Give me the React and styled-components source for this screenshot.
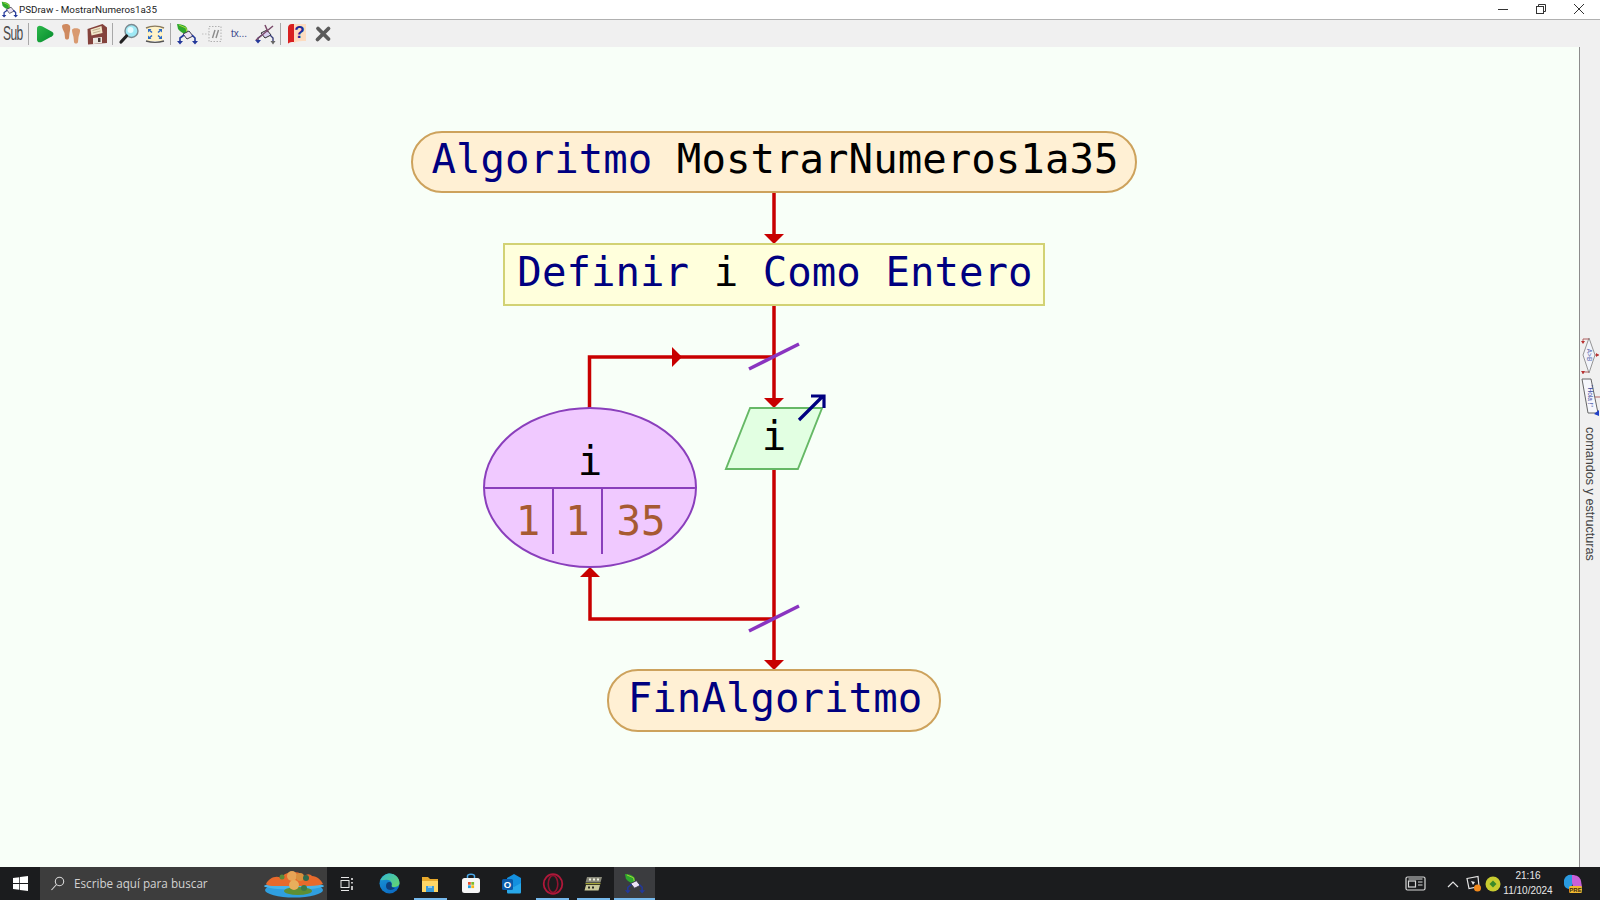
import React from "react";
import styled, { createGlobalStyle } from "styled-components";

const GlobalStyle = createGlobalStyle`
  html, body { margin: 0; padding: 0; height: 100%; overflow: hidden; }
  body { font-family: "Open Sans", "Liberation Sans", sans-serif; }
`;

const Page = styled.div`
  width: 1600px;
  height: 900px;
  display: flex;
  flex-direction: column;
  background: #f0f0f0;
`;

/* window title */
const TitleBar = styled.div`
  height: 19px;
  flex: none;
  display: flex;
  align-items: center;
  padding-left: 1px;
  background: #fff;
  border-bottom: 1px solid #b0b0b0;
`;

const TitleText = styled.span`
  margin-left: 1px;
  font-family: "Roboto", sans-serif;
  font-size: 9.8px;
  color: #222;
  white-space: nowrap;
`;

const WindowButtons = styled.div`
  margin-left: auto;
  display: flex;
  align-items: flex-start;
  align-self: flex-start;
  padding-right: 2px;
`;

const WindowButton = styled.div`
  width: 38px;
  height: 17px;
  display: flex;
  align-items: center;
  justify-content: center;
`;

/* toolbar */
const Toolbar = styled.div`
  height: 27px;
  flex: none;
  display: flex;
  align-items: center;
  background: #f0f0f0;
`;

const SubCell = styled.div`
  width: 26px;
  flex: none;
  padding-left: 3px;
  box-sizing: border-box;
  overflow: hidden;
`;

const SubLabel = styled.span`
  display: inline-block;
  font-family: "Liberation Sans", sans-serif;
  font-size: 20px;
  letter-spacing: -1px;
  color: #4a4a4a;
  transform: scaleX(0.6);
  transform-origin: left center;
`;

const Divider = styled.div`
  width: 1px;
  height: 22px;
  background: #a8a8a8;
  margin: 0 3px 0 2px;
`;

const ToolButton = styled.div`
  width: 26px;
  height: 26px;
  flex: none;
  display: flex;
  align-items: center;
  justify-content: center;
`;

const TxLabel = styled.span`
  font-family: "Liberation Sans", sans-serif;
  font-size: 10px;
  color: #3c4a8c;
`;

/* main area */
const Main = styled.div`
  flex: 1;
  min-height: 0;
  display: flex;
`;

const Canvas = styled.div`
  position: relative;
  flex: 1;
  background: #f8fff8;
`;

const SidePanel = styled.div`
  width: 20px;
  flex: none;
  display: flex;
  flex-direction: column;
  align-items: center;
  gap: 3px;
  padding-top: 291px;
  border-left: 1px solid #8c8c8c;
  background: #f0f0f0;
`;

const SideLabel = styled.span`
  writing-mode: vertical-rl;
  margin-top: 8px;
  font-family: "Liberation Sans", sans-serif;
  font-size: 12.6px;
  color: #444;
  white-space: nowrap;
`;

const WireLayer = styled.svg`
  position: absolute;
  inset: 0;
  width: 100%;
  height: 100%;
  pointer-events: none;
  z-index: ${(p) => p.$z || 0};
`;

const Node = styled.div`
  position: absolute;
  left: ${(p) => p.$x}px;
  top: ${(p) => p.$y}px;
  width: ${(p) => p.$w}px;
  height: ${(p) => p.$h}px;
  box-sizing: border-box;
  display: flex;
  align-items: center;
  justify-content: center;
  padding-left: 2px;
  padding-bottom: ${(p) => p.$pb ?? 6}px;
  font-family: "DejaVu Sans Mono", monospace;
  font-size: 40.7px;
  letter-spacing: 0.04px;
  line-height: 1;
  color: #000;
  white-space: pre;
`;

const Pill = styled(Node)`
  background: #fff0d4;
  border: 2px solid #cda25c;
  border-radius: 31px;
`;

const Process = styled(Node)`
  background: #ffffdc;
  border: 2px solid #d2d274;
`;

const Output = styled(Node)`
  padding-left: 0;

  &::before {
    content: "";
    position: absolute;
    inset: 0 12px;
    background: #e2ffe2;
    border: 2px solid #66b866;
    transform: skewX(-21.6deg);
  }
`;

const OutputText = styled.span`
  position: relative;
`;

const Keyword = styled.span`
  color: #000080;
`;

const ForEllipse = styled.div`
  position: absolute;
  left: ${(p) => p.$x}px;
  top: ${(p) => p.$y}px;
  width: 214px;
  height: 161px;
  box-sizing: border-box;
  overflow: hidden;
  display: flex;
  flex-direction: column;
  background: #f0c9ff;
  border: 2px solid #8a3fbc;
  border-radius: 50%;
  font-family: "DejaVu Sans Mono", monospace;
  font-size: 40.7px;
  line-height: 1;
`;

const ForVariable = styled.div`
  height: 80px;
  flex: none;
  box-sizing: border-box;
  display: flex;
  align-items: flex-end;
  justify-content: center;
  padding-bottom: 5px;
  border-bottom: 2px solid #8a3fbc;
  color: #000;
`;

const ForValues = styled.div`
  display: flex;
  height: 65px;
  padding-left: 19px;
`;

const ForCell = styled.div`
  width: ${(p) => p.$w}px;
  flex: none;
  box-sizing: border-box;
  display: flex;
  align-items: center;
  justify-content: center;
  color: #a65a32;
  border-right: ${(p) => (p.$last ? "none" : "2px solid #8a3fbc")};
`;

/* taskbar */
const Taskbar = styled.div`
  height: 33px;
  flex: none;
  display: flex;
  align-items: stretch;
  background: #1b1c1e;
`;

const StartButton = styled.div`
  width: 40px;
  flex: none;
  display: flex;
  align-items: center;
  justify-content: center;
`;

const SearchBox = styled.div`
  width: 287px;
  flex: none;
  box-sizing: border-box;
  display: flex;
  align-items: center;
  padding-left: 10px;
  background: #3d3d3d;
`;

const SearchText = styled.span`
  margin-left: 9px;
  padding-bottom: 2px;
  font-size: 11.7px;
  color: #d2d2d2;
  white-space: nowrap;
`;

const SearchArt = styled.div`
  margin-left: auto;
  margin-right: 2px;
  display: flex;
`;

const TaskButton = styled.div`
  position: relative;
  width: ${(p) => p.$w || 40.8}px;
  margin-right: ${(p) => p.$gap || 0}px;
  flex: none;
  display: flex;
  align-items: center;
  justify-content: center;
  background: ${(p) => (p.$active ? "#3b3c3f" : "transparent")};

  &::after {
    content: "";
    display: ${(p) => (p.$open ? "block" : "none")};
    position: absolute;
    bottom: 0;
    left: ${(p) => (p.$active ? 0 : 4)}px;
    right: ${(p) => (p.$active ? 0 : 4)}px;
    height: 2px;
    background: #76b9ed;
  }
`;

const Tray = styled.div`
  margin-left: auto;
  display: flex;
  align-items: center;
  padding-right: 12px;
`;

const TrayItem = styled.div`
  width: ${(p) => p.$w}px;
  margin-right: ${(p) => p.$gap || 0}px;
  flex: none;
  display: flex;
  align-items: center;
  justify-content: center;
`;

const Clock = styled.div`
  width: 50px;
  margin-right: 5px;
  padding-bottom: 2px;
  flex: none;
  display: flex;
  flex-direction: column;
  align-items: center;
  font-family: "Liberation Sans", sans-serif;
  font-size: 10px;
  line-height: 15px;
  color: #e8e8e8;
`;

const RED = "#c80000";
const PURPLE = "#8a35c0";
const OFFSET = 47; // the canvas starts below the title and tool bars

const y = (v) => v - OFFSET;

const Wires = () => (
  <WireLayer>
    <g fill="none" stroke={RED} strokeWidth="3.5">
      <path d={`M774 ${y(193)}V${y(236)}`} />
      <path d={`M774 ${y(306)}V${y(400)}`} />
      <path d={`M589.5 ${y(408)}V${y(357)}H774`} />
      <path d={`M774 ${y(469)}V${y(661)}`} />
      <path d={`M774 ${y(619)}H590V${y(575)}`} />
    </g>
    <g fill={RED}>
      <polygon points={`764,${y(234)} 784,${y(234)} 774,${y(244)}`} />
      <polygon points={`764,${y(398)} 784,${y(398)} 774,${y(408)}`} />
      <polygon points={`764,${y(660)} 784,${y(660)} 774,${y(670)}`} />
      <polygon points={`580,${y(577)} 600,${y(577)} 590,${y(567)}`} />
      <polygon points={`672,${y(347)} 672,${y(367)} 682,${y(357)}`} />
    </g>
    <g stroke={PURPLE} strokeWidth="3.5">
      <line x1="749" y1={y(369)} x2="799" y2={y(344)} />
      <line x1="749" y1={y(631)} x2="799" y2={y(606)} />
    </g>
  </WireLayer>
);

const OutputArrow = () => (
  <WireLayer $z={2}>
    <path
      d={`M799 ${y(420)}L823 ${y(396)}M811 ${y(396)}H824V${y(408)}`}
      fill="none"
      stroke="#000080"
      strokeWidth="3.2"
    />
  </WireLayer>
);

/* toolbar drawings */
const FlowIcon = ({ size = 22 }) => (
  <svg width={size} height={size} viewBox="0 0 22 22">
    <path d="M1 1c4 0 8 1 10 4l1 6c-4 0-8-2-10-5z" fill="#2da82d" />
    <path d="M3 2l7 3 1 5" fill="none" stroke="#a8d838" strokeWidth="1" />
    <path d="M7 11l6-3 4 5-6 3z" fill="#ece2f4" stroke="#3a3a4a" strokeWidth="1" />
    <path d="M8 12l-4 3v4M16 12l3 3v4" fill="none" stroke="#23389a" strokeWidth="1.600" />
    <path d="M1 18h6l-3 3.500zM16 18h6l-3 3.500z" fill="#23389a" />
  </svg>
);

const PlayIcon = () => (
  <svg width="20" height="20" viewBox="0 0 20 20">
    <defs>
      <linearGradient id="play" x1="0" y1="0" x2="1" y2="1">
        <stop offset="0" stopColor="#2cb84a" />
        <stop offset="1" stopColor="#048a2c" />
      </linearGradient>
    </defs>
    <path d="M2 4.500c0-2.800 2.500-3.500 5-2.300l10 5.500c2 1.200 2 3.400 0 4.600l-10 5.500c-2.500 1.200-5 .5-5-2.300z" fill="url(#play)" />
  </svg>
);

const FeetIcon = () => (
  <svg width="20" height="22" viewBox="0 0 20 22">
    <path d="M1 3c0-2.500 7-3 8 0 .5 2 0 5-.5 7l-.5 5c-.5 2-3.500 2-4 0l-.5-5C2.500 8 1 5 1 3z" fill="#cf8a60" />
    <path d="M11 7c0-2.500 7.500-2.500 8 0 .3 2-1 5-1.500 7l-.5 5c-.5 2-3.500 2-4 0l-.5-5c-.5-2-1.500-5-1.500-7z" fill="#d99a70" />
  </svg>
);

const FloppyIcon = () => (
  <svg width="22" height="22" viewBox="0 0 22 22">
    <path d="M1.500 6l15-5 4.500 3.500V20l-19 1.500z" fill="#84423c" />
    <path d="M4.500 6.500l11-3.500 1 7-11 2.500z" fill="#f2e6c8" />
    <path d="M6.500 7.500l7.500-2M7 10l7.500-2" stroke="#b9a987" strokeWidth=".9" />
    <path d="M7 15l9-1v6l-9 1z" fill="#ece8e0" />
    <path d="M12 15h2.500v4H12z" fill="#4a3a38" />
  </svg>
);

const SearchIcon = () => (
  <svg width="22" height="22" viewBox="0 0 22 22">
    <circle cx="13.500" cy="8" r="6.500" fill="#9fe9f5" stroke="#7b8a90" strokeWidth="1.400" />
    <circle cx="12.500" cy="7" r="3" fill="#e6fbff" />
    <path d="M8.500 13L3 19" stroke="#222" strokeWidth="3.200" strokeLinecap="round" />
  </svg>
);

const FitIcon = () => (
  <svg width="20" height="20" viewBox="0 0 20 20">
    <rect x="2" y="3" width="16" height="14" fill="#fff3c8" />
    <path d="M1 4c5-2.500 13-2.500 18 0" fill="none" stroke="#8a7a5a" strokeWidth="1.400" />
    <path d="M1 17c5 1.500 13 1.500 18 0" fill="none" stroke="#555" strokeWidth="1.400" />
    <path d="M3.500 5.500l3.500 3M16.500 5.500L13 8.500M3.500 14.500l3.500-3M16.500 14.500L13 11.500" stroke="#2a6ac8" strokeWidth="1.600" />
    <path d="M3 5h3.500L3 8.500zM17 5h-3.500L17 8.500zM3 15h3.500L3 11.500zM17 15h-3.500L17 11.500z" fill="#2a6ac8" />
  </svg>
);

const CommentIcon = () => (
  <svg width="22" height="22" viewBox="0 0 22 22">
    <rect x="7" y="3.500" width="12" height="15" fill="none" stroke="#b0b0b0" strokeDasharray="1.500 1.500" />
    <path d="M0 11h7" stroke="#c0c0c0" strokeDasharray="1.500 1.500" />
    <path d="M10.500 15l2.500-8M14 15l2.500-8" stroke="#8c8c8c" strokeWidth="1.400" />
  </svg>
);

const DebugFlowIcon = () => (
  <svg width="22" height="22" viewBox="0 0 22 22">
    <path d="M7 10l6-3 4 5-6 3z" fill="#d9cfee" stroke="#333" strokeWidth="1" />
    <path d="M8 12l-4 3v3M16 12l3 3v4" fill="none" stroke="#3a3f7a" strokeWidth="1.400" />
    <path d="M1 17h6l-3 3.500z" fill="#23389a" />
    <path d="M16.500 18h5l-2.500 3.500z" fill="#666" />
    <path d="M11 2l3 7M2 17L19 3" stroke="#7a4a6a" strokeWidth="1.500" />
  </svg>
);

const HelpIcon = () => (
  <svg width="20" height="22" viewBox="0 0 20 22">
    <path d="M1 5c0-2.500 1.500-4 4-4h3v18H5c-2 0-4 1-4 2z" fill="#d82020" />
    <path d="M7 1h12v17c-4 0-9 0-12 2z" fill="#fddcc0" />
    <text x="12.500" y="15" textAnchor="middle" fontFamily="Liberation Sans" fontWeight="700" fontSize="17" fill="#1a2a9c">?</text>
  </svg>
);

const CloseToolIcon = () => (
  <svg width="18" height="18" viewBox="0 0 18 18">
    <path d="M4 3.500l10.500 10.500M14.500 3.500L3.500 14.500" stroke="#5a5a5a" strokeWidth="3.800" strokeLinecap="round" />
  </svg>
);

/* side panel drawings */
const SideDecision = () => (
  <svg width="20" height="37" viewBox="0 0 20 37">
    <path d="M9 0l6 17-6 18-6-18z" fill="#f2f4fa" stroke="#8a8a8a" strokeWidth=".9" />
    <text x="9" y="17" transform="rotate(90 9 17)" textAnchor="middle" dominantBaseline="middle" fontSize="6.500" fontFamily="Liberation Sans" fill="#5a6ab0">A&gt;B</text>
    <path d="M9 1H3v3M9 34H3v2M15 17h4" fill="none" stroke="#b06060" strokeWidth="1" />
    <path d="M1 3h4L3 6zM1 33h4l-2 3zM16 15v4l3-2z" fill="#b83030" />
  </svg>
);

const SideOutput = () => (
  <svg width="20" height="38" viewBox="0 0 20 38">
    <path d="M2 1h9l7 34H8z" fill="#f6f7fc" stroke="#666" strokeWidth="1" />
    <text x="10" y="18" transform="rotate(90 10 18)" textAnchor="middle" dominantBaseline="middle" fontSize="6.500" fontFamily="Liberation Sans" fill="#3a4aa0">"Hola !"</text>
    <path d="M14 36l5-4v6z" fill="#2040c8" />
    <path d="M15 19h5" stroke="#b06060" strokeWidth="1" />
  </svg>
);

/* taskbar drawings */
const WindowsLogo = () => (
  <svg width="15" height="15" viewBox="0 0 15 15" fill="#fff">
    <path d="M0 2.100l6.300-.9v5.900H0zM7 1.100L15 0v7.100H7zM0 7.900h6.300v5.900L0 12.900zM7 7.900h8V15l-8-1.100z" />
  </svg>
);

const SearchGlass = () => (
  <svg width="15" height="15" viewBox="0 0 15 15" fill="none" stroke="#d8d8d8" strokeWidth="1.100">
    <circle cx="9.500" cy="5.500" r="4.200" />
    <path d="M6.500 8.500L1.500 14" />
  </svg>
);

const IslandArt = () => (
  <svg width="62" height="28" viewBox="0 0 62 28">
    <ellipse cx="31" cy="20" rx="29" ry="7.500" fill="#2f9fe0" />
    <ellipse cx="31" cy="16" rx="30" ry="3.500" fill="#4ab4ea" />
    <path d="M3 14c3-6 10-9 15-6 3-5 8-6 12-5 4-2 8 0 10 4 4-4 7-3 9-1 5 0 9 4 11 8-6 2-12 2-19 2H12c-4 0-7 0-9-2z" fill="#e86a2c" />
    <circle cx="29" cy="6" r="5" fill="#e8a456" />
    <circle cx="37" cy="7" r="4" fill="#d8903e" />
    <circle cx="19" cy="7" r="2.500" fill="#5a8a3a" />
    <circle cx="43" cy="8" r="3" fill="#2e6a4e" />
    <ellipse cx="35" cy="21" rx="14" ry="4" fill="#5e8e34" />
    <circle cx="31" cy="15" r="5" fill="#e8ae5c" />
    <circle cx="41" cy="18" r="3" fill="#3e7a48" />
  </svg>
);

const TaskViewIcon = () => (
  <svg width="16" height="16" viewBox="0 0 16 16" fill="none" stroke="#e8e8e8" strokeWidth="1">
    <path d="M2 1.500h8M2 14.500h8" />
    <rect x="2" y="4.500" width="8" height="7" />
    <path d="M13 2v2M13 6v1.500M13 10v4" strokeWidth="1.600" />
  </svg>
);

const EdgeIcon = () => (
  <svg width="21" height="21" viewBox="0 0 21 21">
    <defs>
      <linearGradient id="edge" x1="0" y1="0" x2=".6" y2="1">
        <stop offset="0" stopColor="#1a9ad8" />
        <stop offset="1" stopColor="#0c6cc4" />
      </linearGradient>
      <linearGradient id="edgeTop" x1="0" y1="0" x2="1" y2="1">
        <stop offset="0" stopColor="#34b8d0" />
        <stop offset="1" stopColor="#66d66a" />
      </linearGradient>
    </defs>
    <circle cx="10.500" cy="10.500" r="10" fill="url(#edge)" />
    <path d="M1.500 7C4 2 8 .5 10.500.5c6 0 10 4.500 10 9.500 0 3-3 4-5.500 4-2 0-3-.5-2.500-1.500 1-2 0-5-3.500-5.500-3-.5-6 .5-7.500 0z" fill="url(#edgeTop)" />
    <path d="M7 13c0-3 2-4.500 4-4 1.500.5 2 2 1.500 3.500-.3 1 1 2.500 3.500 2.500-1.500 2-5 2.500-7 1.500C8 16 7 15 7 13z" fill="#0e3f7c" />
  </svg>
);

const ExplorerIcon = () => (
  <svg width="18" height="18" viewBox="0 0 18 18">
    <path d="M1 2h6l2 2h8v13H1z" fill="#e8a92c" />
    <path d="M1 6h16v11H1z" fill="#ffd666" />
    <path d="M5 11h8v6H5z" fill="#3a9ad8" />
    <path d="M7 11h4v2H7z" fill="#8cc8ec" />
  </svg>
);

const StoreIcon = () => (
  <svg width="20" height="21" viewBox="0 0 20 21">
    <path d="M6.500 6V3c0-2.500 7-2.500 7 0v3" fill="none" stroke="#4aa8e8" strokeWidth="1.500" />
    <rect x="1" y="5" width="18" height="15" rx="2.500" fill="#f6f6f6" />
    <path d="M7 9h2.800v2.800H7z" fill="#e8502c" />
    <path d="M10.300 9h2.800v2.800h-2.800z" fill="#7cbc2c" />
    <path d="M7 12.300h2.800v2.800H7z" fill="#1ca0e4" />
    <path d="M10.300 12.300h2.800v2.800h-2.800z" fill="#f8b818" />
  </svg>
);

const OutlookIcon = () => (
  <svg width="21" height="21" viewBox="0 0 21 21">
    <path d="M6 5l7-4 7 4v13H6z" fill="#1490df" />
    <path d="M6 10l7 4 7-4v9c0 1-.5 1.500-1.500 1.500h-11C6.500 20.500 6 20 6 19z" fill="#28a8ea" />
    <rect x="1" y="6" width="11" height="11" rx="1.500" fill="#0a5aa8" />
    <text x="6.500" y="15" textAnchor="middle" fontFamily="Liberation Sans" fontWeight="700" fontSize="9.500" fill="#fff">O</text>
  </svg>
);

const OperaIcon = () => (
  <svg width="22" height="22" viewBox="0 0 22 22" fill="none">
    <ellipse cx="11" cy="11" rx="9.300" ry="9.800" strokeWidth="1.800" stroke="#b0183a" />
    <ellipse cx="11" cy="11" rx="4.800" ry="8.500" strokeWidth="1.600" stroke="#901430" />
  </svg>
);

const NotesIcon = () => (
  <svg width="20" height="20" viewBox="0 0 20 20">
    <path d="M4 3h15l-1.500 5.500H2.500z" fill="#8a8a7a" />
    <path d="M3 11h14l-1.500 5.500H1.500z" fill="#c8c89a" />
    <path d="M6 5.500h2M10 5.500h2M14 5.500h2" stroke="#f0f0e0" strokeWidth="2" />
    <path d="M5 13.500h2M9 13.500h2" stroke="#2a2a20" strokeWidth="2" />
    <path d="M2.500 9.700h15" stroke="#c8c840" strokeWidth="1" />
  </svg>
);

const NewsIcon = () => (
  <svg width="21" height="17" viewBox="0 0 21 17" fill="none" stroke="#d8d8d8" strokeWidth="1.200">
    <rect x="1" y="2" width="19" height="13" rx="1.500" />
    <rect x="3.500" y="6" width="7" height="6" />
    <path d="M3.500 4h14M13 7h4.500M13 10h4.500" />
  </svg>
);

const ChevronIcon = () => (
  <svg width="12" height="8" viewBox="0 0 12 8" fill="none" stroke="#e4e4e4" strokeWidth="1.200">
    <path d="M1 7l5-5 5 5" />
  </svg>
);

const SyncIcon = () => (
  <svg width="17" height="17" viewBox="0 0 17 17">
    <path d="M2 3.500L13 1.500l1 10-10 2z" fill="none" stroke="#e4e4e4" strokeWidth="1.200" />
    <path d="M6 6l4 1-2 3z" fill="#e4e4e4" />
    <circle cx="12.500" cy="13" r="3.500" fill="#f28a1c" />
  </svg>
);

const GreenDotIcon = () => (
  <svg width="16" height="16" viewBox="0 0 16 16">
    <circle cx="8" cy="8" r="7.500" fill="#c8cc30" />
    <path d="M4.500 8l3.500-3.500L11.500 8 8 11.500z" fill="#3a8a2a" />
  </svg>
);

const CopilotIcon = () => (
  <svg width="22" height="22" viewBox="0 0 22 22">
    <path d="M2 7c1-4 5-6 8-5l3 5-5 9c-3 0-6-2-6-5z" fill="#2a9ae0" />
    <path d="M10 2c5 0 8 2 9 6l1 6H11l-1-5z" fill="#c860d8" />
    <rect x="7" y="13" width="13" height="7" rx="1.500" fill="#f0b830" />
    <text x="13.500" y="19" textAnchor="middle" fontFamily="Liberation Sans" fontWeight="700" fontSize="6" fill="#3a2a10">PRE</text>
  </svg>
);

const App = () => (
  <Page>
    <GlobalStyle />
    <TitleBar>
      <FlowIcon size={17} />
      <TitleText>PSDraw - MostrarNumeros1a35</TitleText>
      <WindowButtons>
        <WindowButton>
          <svg width="10" height="10" viewBox="0 0 10 10">
            <path d="M0 5.500h10" stroke="#333" />
          </svg>
        </WindowButton>
        <WindowButton>
          <svg width="10" height="10" viewBox="0 0 10 10" fill="none" stroke="#333">
            <path d="M2.500 2V.500h7v7H8" />
            <rect x=".5" y="2.500" width="7" height="7" />
          </svg>
        </WindowButton>
        <WindowButton>
          <svg width="10" height="10" viewBox="0 0 10 10">
            <path d="M0 0l10 10M10 0L0 10" stroke="#333" />
          </svg>
        </WindowButton>
      </WindowButtons>
    </TitleBar>

    <Toolbar>
      <SubCell><SubLabel>Sub</SubLabel></SubCell>
      <Divider />
      <ToolButton><PlayIcon /></ToolButton>
      <ToolButton><FeetIcon /></ToolButton>
      <ToolButton><FloppyIcon /></ToolButton>
      <Divider />
      <ToolButton><SearchIcon /></ToolButton>
      <ToolButton><FitIcon /></ToolButton>
      <Divider />
      <ToolButton><FlowIcon /></ToolButton>
      <ToolButton><CommentIcon /></ToolButton>
      <ToolButton><TxLabel>tx...</TxLabel></ToolButton>
      <ToolButton><DebugFlowIcon /></ToolButton>
      <Divider />
      <ToolButton><HelpIcon /></ToolButton>
      <ToolButton><CloseToolIcon /></ToolButton>
    </Toolbar>

    <Main>
      <Canvas>
        <Wires />
        <Pill $x={411} $y={y(131)} $w={726} $h={62}>
          <span><Keyword>Algoritmo</Keyword> MostrarNumeros1a35</span>
        </Pill>
        <Process $x={503} $y={y(243)} $w={542} $h={63} $pb={4}>
          <span><Keyword>Definir</Keyword> i <Keyword>Como Entero</Keyword></span>
        </Process>
        <ForEllipse $x={483} $y={y(407)}>
          <ForVariable>i</ForVariable>
          <ForValues>
            <ForCell $w={50}>1</ForCell>
            <ForCell $w={49}>1</ForCell>
            <ForCell $w={76} $last>35</ForCell>
          </ForValues>
        </ForEllipse>
        <Output $x={725} $y={y(407)} $w={98} $h={63} $pb={4}>
          <OutputText>i</OutputText>
        </Output>
        <Pill $x={607} $y={y(669)} $w={334} $h={63} $pb={4}>
          <Keyword>FinAlgoritmo</Keyword>
        </Pill>
        <OutputArrow />
      </Canvas>
      <SidePanel>
        <SideDecision />
        <SideOutput />
        <SideLabel>comandos y estructuras</SideLabel>
      </SidePanel>
    </Main>

    <Taskbar>
      <StartButton><WindowsLogo /></StartButton>
      <SearchBox>
        <SearchGlass />
        <SearchText>Escribe aquí para buscar</SearchText>
        <SearchArt><IslandArt /></SearchArt>
      </SearchBox>
      <TaskButton $w={40} $gap={2}><TaskViewIcon /></TaskButton>
      <TaskButton><EdgeIcon /></TaskButton>
      <TaskButton $open><ExplorerIcon /></TaskButton>
      <TaskButton><StoreIcon /></TaskButton>
      <TaskButton><OutlookIcon /></TaskButton>
      <TaskButton $open><OperaIcon /></TaskButton>
      <TaskButton $open><NotesIcon /></TaskButton>
      <TaskButton $open $active><FlowIcon size={21} /></TaskButton>
      <Tray>
        <TrayItem $w={30} $gap={13}><NewsIcon /></TrayItem>
        <TrayItem $w={20}><ChevronIcon /></TrayItem>
        <TrayItem $w={20}><SyncIcon /></TrayItem>
        <TrayItem $w={20}><GreenDotIcon /></TrayItem>
        <Clock>
          <span>21:16</span>
          <span>11/10/2024</span>
        </Clock>
        <TrayItem $w={30}><CopilotIcon /></TrayItem>
      </Tray>
    </Taskbar>
  </Page>
);

export default App;
